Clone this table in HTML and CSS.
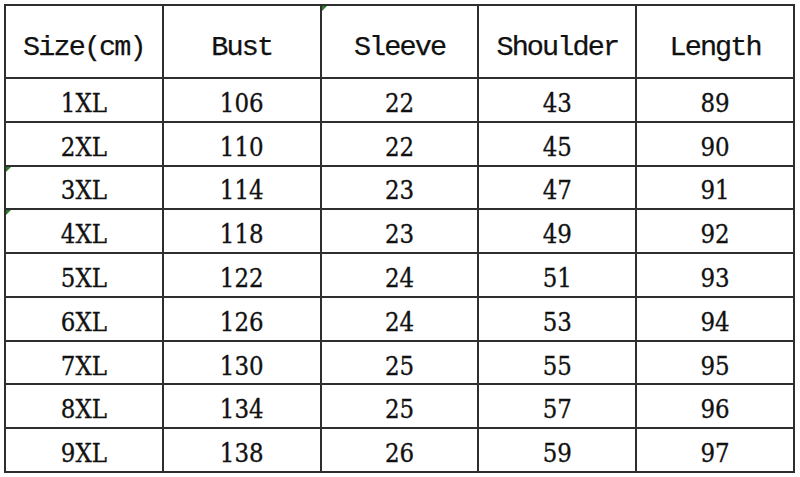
FILE: index.html
```html
<!DOCTYPE html>
<html>
<head>
<meta charset="utf-8">
<link rel="stylesheet" href="styles.css">
</head>
<body>
<div class="sheet">
  <div class="table">
    <div class="cell head">Size(cm)</div>
    <div class="cell head">Bust</div>
    <div class="cell head mark">Sleeve</div>
    <div class="cell head">Shoulder</div>
    <div class="cell head">Length</div>

    <div class="cell">1XL</div><div class="cell">106</div><div class="cell">22</div><div class="cell">43</div><div class="cell">89</div>
    <div class="cell">2XL</div><div class="cell">110</div><div class="cell">22</div><div class="cell">45</div><div class="cell">90</div>
    <div class="cell mark">3XL</div><div class="cell">114</div><div class="cell">23</div><div class="cell">47</div><div class="cell">91</div>
    <div class="cell mark">4XL</div><div class="cell">118</div><div class="cell">23</div><div class="cell">49</div><div class="cell">92</div>
    <div class="cell">5XL</div><div class="cell">122</div><div class="cell">24</div><div class="cell">51</div><div class="cell">93</div>
    <div class="cell">6XL</div><div class="cell">126</div><div class="cell">24</div><div class="cell">53</div><div class="cell">94</div>
    <div class="cell">7XL</div><div class="cell">130</div><div class="cell">25</div><div class="cell">55</div><div class="cell">95</div>
    <div class="cell">8XL</div><div class="cell">134</div><div class="cell">25</div><div class="cell">57</div><div class="cell">96</div>
    <div class="cell">9XL</div><div class="cell">138</div><div class="cell">26</div><div class="cell">59</div><div class="cell">97</div>
  </div>
</div>
</body>
</html>
```
FILE: styles.css
```css
html, body {
  margin: 0;
  padding: 0;
  background: #ffffff;
}
.sheet {
  padding: 4px 0 0 4px;
  width: 800px;
  height: 477px;
  box-sizing: border-box;
}
.table {
  display: grid;
  grid-template-columns: repeat(5, 1fr);
  grid-template-rows: 71px repeat(9, 1fr);
  gap: 2px;
  padding: 2px;
  width: 791px;
  height: 469px;
  box-sizing: border-box;
  background: #2e2e2e;
}
.cell {
  position: relative;
  background: #ffffff;
  display: flex;
  align-items: center;
  justify-content: center;
  color: #111111;
  font-family: "DejaVu Serif Condensed", "DejaVu Serif", serif;
  font-stretch: condensed;
  font-size: 25.5px;
  -webkit-text-stroke: 0.3px #111111;
  padding-top: 6px;
  box-sizing: border-box;
}
.cell.head {
  font-family: "Liberation Mono", "Courier New", monospace;
  font-stretch: normal;
  font-size: 28.5px;
  letter-spacing: -1.9px;
  -webkit-text-stroke: 0.25px #111111;
  padding-top: 11px;
}
.mark::before {
  content: "";
  position: absolute;
  left: 0;
  top: 0;
  border-top: 5px solid #2a7a2a;
  border-right: 5px solid transparent;
}
```
